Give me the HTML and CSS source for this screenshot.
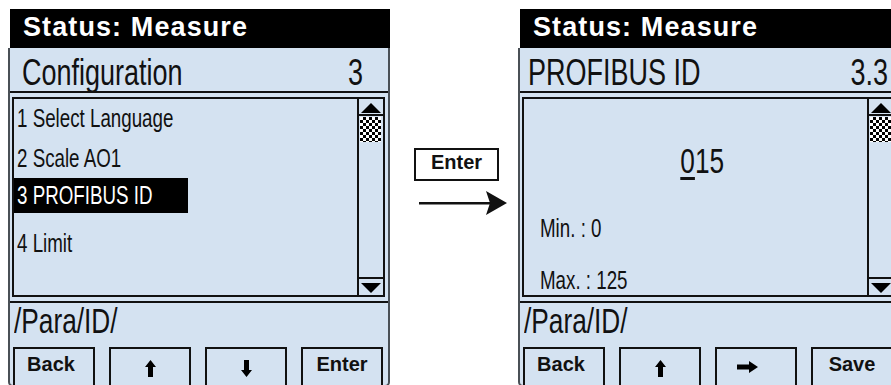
FILE: index.html
```html
<!DOCTYPE html>
<html lang="en">
<head>
  <meta charset="UTF-8">
  <title>Display: PROFIBUS ID</title>
  <link rel="stylesheet" href="styles.css">
</head>
<body>
  <div class="stage">

    <section class="screen">
      <div class="status">Status: Measure</div>
      <div class="panel">
        <div class="title">
          <span class="cond">Configuration</span>
          <span class="cond cond-r">3</span>
        </div>
        <div class="box">
          <ul class="menu">
            <li class="item"><span class="cond">1 Select Language</span></li>
            <li class="item"><span class="cond">2 Scale AO1</span></li>
            <li class="item sel"><span class="cond">3 PROFIBUS ID</span></li>
            <li class="item"><span class="cond">4 Limit</span></li>
          </ul>
          <div class="scroll">
            <div class="scroll-up"><svg width="20" height="10" viewBox="0 0 20 10"><path d="M10 0L20 10H0Z"/></svg></div>
            <div class="thumb"></div>
            <div class="scroll-space"></div>
            <div class="scroll-down"><svg width="20" height="10" viewBox="0 0 20 10"><path d="M0 0H20L10 10Z"/></svg></div>
          </div>
        </div>
        <div class="path"><span class="cond">/Para/ID/</span></div>
        <div class="keys">
          <div class="key key-back">Back</div>
          <div class="key"><svg width="11" height="17" viewBox="0 0 11 17"><path d="M5.5 0L11 7H8V17H3V7H0Z"/></svg></div>
          <div class="key"><svg width="11" height="17" viewBox="0 0 11 17"><path d="M3 0H8V10H11L5.5 17L0 10H3Z"/></svg></div>
          <div class="key">Enter</div>
        </div>
      </div>
    </section>

    <div class="transition">
      <div class="enter-tag">Enter</div>
      <svg class="arrow" width="88" height="24" viewBox="0 0 88 24">
        <path d="M0 11H72V13.5H0Z"/>
        <path d="M67 0L88 12L67 24L71 12Z"/>
      </svg>
    </div>

    <section class="screen">
      <div class="status">Status: Measure</div>
      <div class="panel">
        <div class="title title-sub">
          <span class="cond">PROFIBUS ID</span>
          <span class="cond cond-r">3.3</span>
        </div>
        <div class="box">
          <div class="value-pane">
            <div class="value"><span class="cond cond-c"><u>0</u>15</span></div>
            <div class="limit limit-min"><span class="cond">Min. : 0</span></div>
            <div class="limit limit-max"><span class="cond">Max. : 125</span></div>
          </div>
          <div class="scroll">
            <div class="scroll-up"><svg width="20" height="10" viewBox="0 0 20 10"><path d="M10 0L20 10H0Z"/></svg></div>
            <div class="thumb"></div>
            <div class="scroll-space"></div>
            <div class="scroll-down"><svg width="20" height="10" viewBox="0 0 20 10"><path d="M0 0H20L10 10Z"/></svg></div>
          </div>
        </div>
        <div class="path"><span class="cond">/Para/ID/</span></div>
        <div class="keys">
          <div class="key key-back">Back</div>
          <div class="key"><svg width="11" height="17" viewBox="0 0 11 17"><path d="M5.5 0L11 7H8V17H3V7H0Z"/></svg></div>
          <div class="key key-right"><svg width="21" height="12" viewBox="0 0 21 12"><path d="M0 3.5H12V0L21 6L12 12V8.5H0Z"/></svg></div>
          <div class="key">Save</div>
        </div>
      </div>
    </section>

  </div>
</body>
</html>
```

FILE: styles.css
```css
body {
  margin: 0;
  background-color: #fff;
  font-family: "Liberation Sans", Arial, sans-serif;
  color: #111;
  overflow: hidden;
}

.stage {
  display: flex;
  align-items: flex-start;
  width: max-content;
  padding: 9px 0 0 8px;
}

.screen {
  flex: none;
  width: 382px;
}

/* condensed display font */
.cond {
  display: inline-block;
  white-space: nowrap;
  transform: scaleX(0.75);
  transform-origin: 0 50%;
}

.cond-r {
  transform-origin: 100% 50%;
}

.cond-c {
  transform-origin: 50% 50%;
}

.status {
  height: 39px;
  margin-left: 2px;
  padding-left: 13px;
  background-color: #000;
  color: #fff;
  font-weight: bold;
  font-size: 27px;
  line-height: 36px;
  letter-spacing: 1.1px;
  white-space: nowrap;
}

.panel {
  height: 339px;
  box-sizing: border-box;
  border: 2px solid #4a5056;
  border-top: 0;
  border-radius: 0 0 5px 5px;
  background-color: #d4e2f1;
  overflow: hidden;
}

.title {
  display: flex;
  justify-content: space-between;
  height: 45px;
  box-sizing: border-box;
  padding: 7px 25px 0 12px;
  border-bottom: 2px solid #111;
  font-size: 36px;
  line-height: 36px;
}

.title-sub {
  padding: 7px 10px 0 8px;
}

.box {
  display: flex;
  height: 200px;
  box-sizing: border-box;
  margin: 4px 3px 0 2px;
  border: 2px solid #111;
}

.menu {
  flex: 1;
  list-style: none;
  margin: 0;
  padding: 0;
  font-size: 25px;
}

.item {
  padding-left: 3px;
  line-height: 40px;
  white-space: nowrap;
}

.item:first-child {
  line-height: 39px;
}

.item.sel {
  width: 171px;
  background-color: #000;
  color: #fff;
  line-height: 35px;
}

.item:last-child {
  margin-top: 13px;
  line-height: 35px;
}

.scroll {
  display: flex;
  flex-direction: column;
  width: 24px;
  border-left: 2px solid #111;
}

.scroll svg {
  display: block;
  margin: 0 auto;
}

.scroll-up {
  height: 17px;
  box-sizing: border-box;
  padding-top: 4px;
  border-bottom: 2px solid #111;
}

.thumb {
  height: 25px;
  margin: 1px 2px 0 1px;
  background: repeating-conic-gradient(#000 0 25%, #fff 0 50%) 0 0 / 6px 6px;
}

.scroll-space {
  flex: 1;
}

.scroll-down {
  height: 18px;
  box-sizing: border-box;
  padding-top: 4px;
  border-top: 2px solid #111;
}

.value-pane {
  flex: 1;
}

.value {
  padding: 42px 0 0 14px;
  font-size: 35px;
  line-height: 40px;
  text-align: center;
}

.value u {
  text-decoration-thickness: 3px;
  text-underline-offset: 4px;
}

.limit {
  padding-left: 16px;
  font-size: 25px;
  line-height: 30px;
}

.limit-min {
  margin-top: 32px;
}

.limit-max {
  margin-top: 22px;
}

.path {
  height: 46px;
  box-sizing: border-box;
  margin-top: 4px;
  padding-left: 4px;
  border-top: 2px solid #111;
  font-size: 35px;
  line-height: 36px;
}

.keys {
  display: grid;
  grid-template-columns: repeat(4, 82px);
  column-gap: 14px;
  padding-left: 3px;
}

.key {
  height: 44px;
  box-sizing: border-box;
  border: 2px solid #111;
  font-weight: bold;
  font-size: 20px;
  line-height: 30px;
  text-align: center;
}

.key svg {
  display: block;
  margin: 11px auto 0;
}

.key-back {
  padding-right: 6px;
}

.key-right svg {
  margin: 12px 0 0 20px;
}

.transition {
  flex: none;
  width: 128px;
  padding-top: 139px;
}

.enter-tag {
  width: 85px;
  height: 33px;
  box-sizing: border-box;
  margin-left: 24px;
  border: 2px solid #111;
  font-weight: bold;
  font-size: 20px;
  line-height: 25px;
  text-align: center;
}

.arrow {
  display: block;
  margin: 10px 0 0 29px;
  fill: #111;
}
```
